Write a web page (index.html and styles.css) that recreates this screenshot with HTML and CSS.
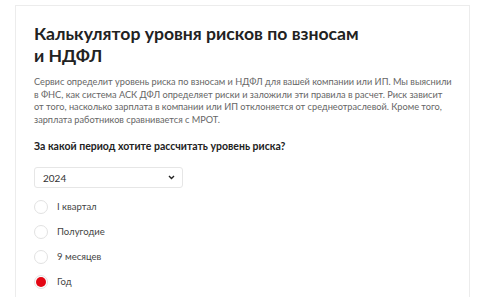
FILE: index.html
```html
<!DOCTYPE html>
<html lang="ru">
<head>
<meta charset="utf-8">
<link rel="stylesheet" href="styles.css">
</head>
<body>
<div class="card">
  <h1 class="title">Калькулятор уровня рисков по взносам<br>и НДФЛ</h1>
  <p class="lead">Сервис определит уровень риска по взносам и НДФЛ для вашей компании или ИП. Мы выяснили<br>в ФНС, как система АСК ДФЛ определяет риски и заложили эти правила в расчет. Риск зависит<br>от того, насколько зарплата в компании или ИП отклоняется от среднеотраслевой. Кроме того,<br>зарплата работников сравнивается с МРОТ.</p>
  <h2 class="question">За какой период хотите рассчитать уровень риска?</h2>
  <div class="select">
    <span class="select-value">2024</span>
    <svg class="chevron" width="7" height="5" viewBox="0 0 7 5"><path d="M1 1 L3.5 3.5 L6 1" fill="none" stroke="#222" stroke-width="1.4"/></svg>
  </div>
  <div class="radios">
    <div class="radio"><span class="dot"></span><span class="label">I квартал</span></div>
    <div class="radio"><span class="dot"></span><span class="label">Полугодие</span></div>
    <div class="radio"><span class="dot"></span><span class="label">9 месяцев</span></div>
    <div class="radio"><span class="dot checked"></span><span class="label">Год</span></div>
  </div>
</div>
</body>
</html>
```
FILE: styles.css
```css
html, body {
  margin: 0;
  padding: 0;
  background: #ffffff;
}
body {
  font-family: "Lato", "Open Sans", sans-serif;
  color: #222;
}
.card {
  margin: 5px 9px 0 15px;
  border: 1px solid #ececec;
  border-bottom: none;
  padding: 17px 4px 0 18px;
  height: 300px;
  box-sizing: border-box;
}
.title {
  margin: 0;
  font-size: 17.6px;
  line-height: 22px;
  font-weight: 700;
  color: #222;
}
.lead {
  margin: 9px 0 0 0;
  font-size: 9.2px;
  line-height: 12.5px;
  color: #666;
  white-space: nowrap;
}
.question {
  margin: 13px 0 0 0;
  font-size: 10.5px;
  line-height: 14px;
  font-weight: 700;
  color: #222;
}
.select {
  margin-top: 14px;
  width: 149px;
  height: 21px;
  box-sizing: border-box;
  border: 1px solid #e6e6e6;
  border-radius: 3px;
  display: flex;
  align-items: center;
  justify-content: space-between;
  padding: 0 7px 0 8px;
}
.select-value {
  font-size: 10px;
  color: #333;
}
.radios {
  margin-top: 6px;
  display: flex;
  flex-direction: column;
}
.radio {
  height: 25px;
  display: flex;
  align-items: center;
  gap: 9px;
}
.dot {
  width: 14px;
  height: 14px;
  box-sizing: border-box;
  border: 1px solid #e2e2e2;
  border-radius: 50%;
  background: #fff;
  display: flex;
  align-items: center;
  justify-content: center;
}
.dot.checked::after {
  content: "";
  width: 10px;
  height: 10px;
  border-radius: 50%;
  background: #e30613;
}
.label {
  font-size: 9.5px;
  color: #444;
}
```
